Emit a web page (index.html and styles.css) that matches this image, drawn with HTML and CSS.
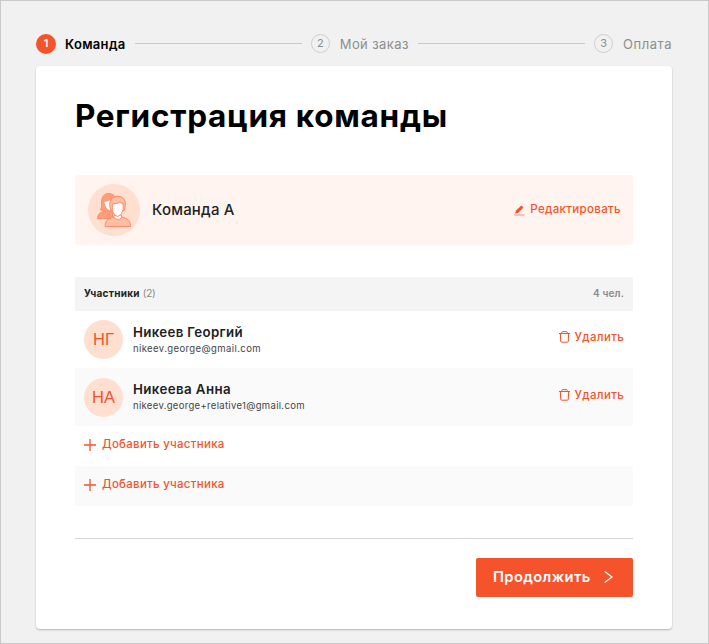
FILE: index.html
```
<!DOCTYPE html>
<html lang="ru">
<head>
<meta charset="utf-8">
<title>Регистрация команды</title>
<link rel="stylesheet" href="styles.css">
</head>
<body>
<svg width="0" height="0" class="sprite">
  <symbol id="trash" viewBox="0 0 11 12"><path d="M0 2.5h11M2.700 2.2V1.5q0-.9.900-.9h3.8q.900 0 .900.900v.7M1.4 2.8l.3 7.500q0 .9.9.9h5.8q.9 0 .9-.9l.3-7.500" fill="none" stroke="#f4532c"/></symbol>
  <symbol id="plus" viewBox="0 0 12 12"><path d="M6 0v12M0 6h12" fill="none" stroke="#f4532c" stroke-width="1.3"/></symbol>
</svg>
<main class="page">
  <nav class="steps">
    <span class="num active">1</span><span class="step current">Команда</span><i class="line"></i>
    <span class="num">2</span><span class="step order">Мой заказ</span><i class="line"></i>
    <span class="num">3</span><span class="step pay">Оплата</span>
  </nav>
  <section class="card">
    <h1>Регистрация команды</h1>
    <div class="team">
      <svg class="team-icon" viewBox="0 0 52 52">
        <circle cx="26" cy="26" r="26" fill="#ffdfd0"/>
        <g stroke="#ff8c6b" stroke-width="1" stroke-linejoin="round">
          <path d="M9.500 34.500q.3-5.500 5-6.500l5-2 5 2v6.500z" fill="#ff9d7b"/>
          <path d="M12.500 26q1.500-3 1-8 .4-7.500 6-8.500 6-.3 7.500 4v11l-8 3z" fill="#ff9d7b"/>
          <path d="M16.500 18q4-.5 6-2v10.500q-5-1-6-8.500z" fill="#fff" stroke="none"/>
          <path d="M17 42.500q0-7.500 7-8.800l3.500-1.200h5l3.500 1.200q6.500 1.300 6.500 8.800z" fill="#ffbda3"/>
          <path d="M26 31v2.500q4 4 7.500 0V31z" fill="#fff"/>
          <path d="M23 26.500q-1.700-3-1.200-7.500 1-6.500 8-6.800 7.500.5 7.500 7.800 0 4-1.200 6.500z" fill="#ffbda3"/>
          <path d="M24.300 20q5 .2 7.500-2.200 1 1.500 3.300 1.700v6q-.7 5.500-5.300 7-5-1.500-5.500-7z" fill="#fff"/>
        </g>
      </svg>
      <span class="team-name">Команда А</span>
      <a class="action edit">
        <svg width="11" height="11" viewBox="0 0 11 11"><path d="M1.200 8.500l.6-2.700L7.300.5l2.200 2L4 7.900z" fill="#f4532c"/><path d="M0 10h10.500" stroke="#f9a994" stroke-width="1.300"/></svg>
        <span>Редактировать</span>
      </a>
    </div>
    <div class="members">
      <header class="members-head"><b>Участники</b><span class="count">(2)</span><span class="total">4 чел.</span></header>
      <div class="member">
        <span class="avatar">НГ</span>
        <div class="who"><div class="name n1">Никеев Георгий</div><div class="mail m1">nikeev.george@gmail.com</div></div>
        <a class="action"><svg width="11" height="12"><use href="#trash"/></svg><span>Удалить</span></a>
      </div>
      <div class="member alt">
        <span class="avatar">НА</span>
        <div class="who"><div class="name">Никеева Анна</div><div class="mail">nikeev.george+relative1@gmail.com</div></div>
        <a class="action"><svg width="11" height="12"><use href="#trash"/></svg><span>Удалить</span></a>
      </div>
      <a class="add"><svg width="12" height="12"><use href="#plus"/></svg><span>Добавить участника</span></a>
      <a class="add alt"><svg width="12" height="12"><use href="#plus"/></svg><span>Добавить участника</span></a>
    </div>
    <footer class="foot">
      <button class="next"><span>Продолжить</span><svg width="9" height="12" viewBox="0 0 9 12"><path d="M.7.600L8 6 .7 11.400" fill="none" stroke="#fff" stroke-width="1.200"/></svg></button>
    </footer>
  </section>
</main>
</body>
</html>
```
FILE: styles.css
```
* { box-sizing: border-box; }
body { margin: 0; font-family: Inter, "Open Sans", sans-serif; color: #222; }
.sprite { position: absolute; }
.page { width: 709px; height: 644px; padding: 32px 36px 0 35px; background: #f1f1f1; border: 1px solid #c9c9c9; overflow: hidden; }
svg { flex: none; display: block; }

.steps { display: flex; align-items: center; height: 21px; font-size: 13px; color: #8e8e8e; white-space: nowrap; }
.num { width: 19px; height: 19px; flex: none; border: 1px solid #cfcfcf; border-radius: 50%; font-size: 11px; line-height: 17px; text-align: center; margin-right: 10px; }
.num.active { width: 20px; height: 20px; margin-right: 9px; border: 0; background: #f4532c; color: #fff; font-weight: 600; line-height: 19px; }
.step { letter-spacing: .41px; }
.step.current { color: #000; font-weight: 600; letter-spacing: .31px; }
.step.pay { letter-spacing: .54px; }
.line { flex: 1; height: 1px; margin: 0 9px; background: #cacaca; }

.card { width: 636px; height: 563px; margin-top: 12px; padding: 30px 39px 0; background: #fff; border-radius: 4px; box-shadow: 0 1px 2px rgba(0,0,0,.25); }
h1 { margin: 0; height: 79px; font-size: 31.500px; line-height: 40px; font-weight: 700; letter-spacing: .720px; color: #000; white-space: nowrap; }

.team { display: flex; align-items: center; height: 70px; padding: 0 12px; background: #fff4ef; border-radius: 4px; }
.team-icon { width: 52px; height: 52px; margin: 0 12px 0 1px; }
.team-name { margin-top: -2px; font-size: 15px; font-weight: 500; letter-spacing: .2px; }
.action { display: flex; align-items: center; gap: 5px; margin-left: auto; color: #f4532c; font-size: 11.500px; font-weight: 500; letter-spacing: .32px; }
.edit svg { margin-top: 2px; }
.edit { margin-top: -2px; letter-spacing: .34px; }

.members { margin-top: 32px; }
.members-head { display: flex; align-items: center; height: 34px; padding: 0 9px 2px; background: #f4f4f4; font-size: 10px; color: #8a8a8a; }
.members-head b { color: #222; letter-spacing: .28px; }
.count { margin-left: 3px; letter-spacing: -.3px; }
.total { margin-left: auto; font-weight: 600; letter-spacing: .14px; }
.member { display: flex; align-items: center; height: 57px; padding: 0 9px; }
.alt { background: #fafafa; }
.member.alt { height: 58px; }
.avatar { width: 39px; height: 39px; margin-right: 10px; border-radius: 50%; background: #ffdfd0; color: #f4532c; font: 16.500px/38px "Liberation Sans", sans-serif; text-align: center; }
.who { margin-top: 0; }
.name { font-size: 13.300px; line-height: 17px; font-weight: 600; letter-spacing: .4px; }
.name.n1 { letter-spacing: .33px; }
.mail { font-size: 9.500px; line-height: 15px; letter-spacing: .32px; color: #444; }
.mail.m1 { letter-spacing: .4px; }
.member .action { margin-top: -5px; }
.add { display: flex; align-items: center; gap: 6px; height: 40px; padding: 0 9px 5px; color: #f4532c; font-size: 11.500px; font-weight: 500; letter-spacing: .28px; }
.add svg { margin-top: 2px; }

.foot { display: flex; justify-content: flex-end; margin-top: 32px; padding-top: 19px; border-top: 1px solid #d6d6d6; }
.next { display: flex; align-items: center; width: 157px; height: 39px; padding: 0 17px 2px; border: 0; border-radius: 2px; background: #f4532c; color: #fff; font: 600 14.700px Inter, sans-serif; letter-spacing: .4px; }
.next svg { margin-left: 13px; }
```
